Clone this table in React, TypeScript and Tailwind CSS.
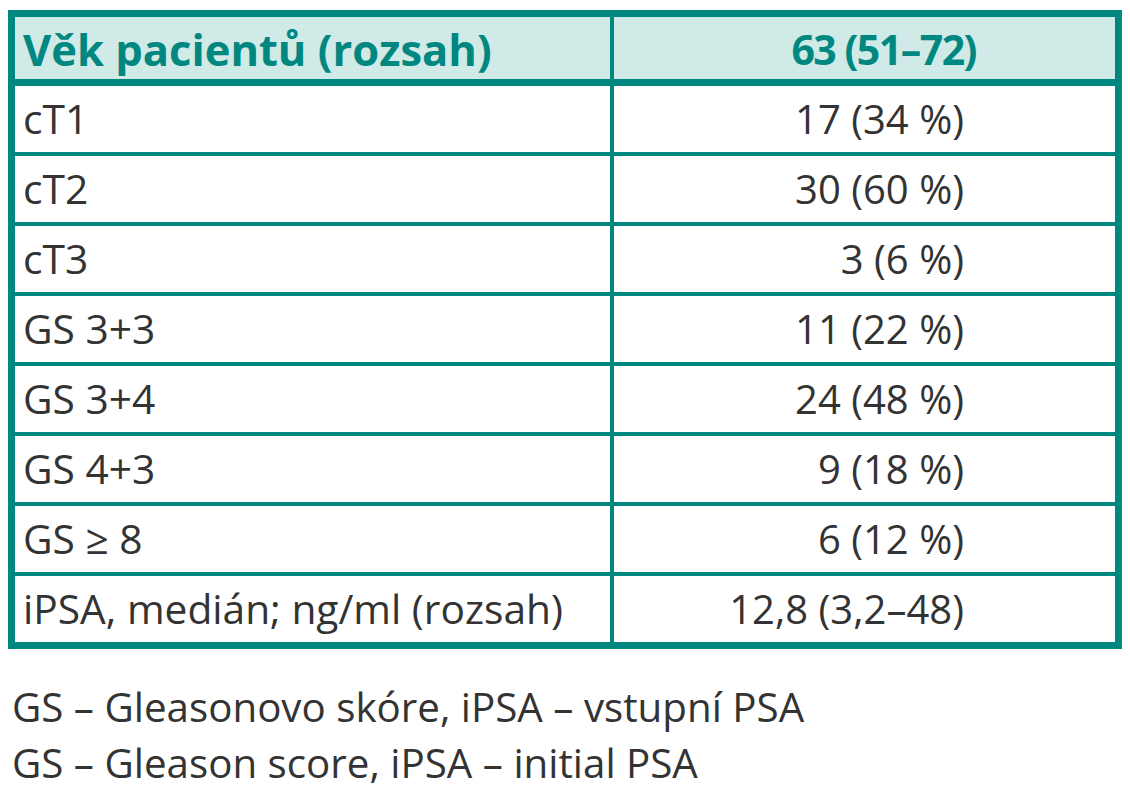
import React from "react";

const rows: [string, string][] = [
  ["cT1", "17 (34 %)"],
  ["cT2", "30 (60 %)"],
  ["cT3", "3 (6 %)"],
  ["GS 3+3", "11 (22 %)"],
  ["GS 3+4", "24 (48 %)"],
  ["GS 4+3", "9 (18 %)"],
  ["GS ≥ 8", "6 (12 %)"],
  ["iPSA, medián; ng/ml (rozsah)", "12,8 (3,2–48)"],
];

export default function App() {
  return (
    <div className="w-[1130px] h-[800px] bg-white pt-[10px] px-[8px] font-['Open_Sans',sans-serif] text-[#333]">
      {/* Table */}
      <div className="border-[7px] border-[#00877f]">
        <div className="grid grid-cols-[595px_1fr] h-[69px] bg-[#cfeae7] border-b-[7px] border-[#00877f] text-[#00877f] font-bold">
          <div className="flex items-center pl-[8px] text-[43.5px]">Věk pacientů (rozsah)</div>
          <div className="flex items-center justify-end pr-[139px] border-l-[4px] border-[#00877f] text-[41px] tracking-[-1.5px]">63 (51–72)</div>
        </div>
        {rows.map(([label, value], i) => (
          <div
            key={label}
            className={`grid grid-cols-[595px_1fr] text-[40px] ${
              i < rows.length - 1 ? "h-[70px] border-b-[4px] border-[#00877f]" : "h-[66px]"
            }`}
          >
            <div className="flex items-center pl-[8px] text-[40.7px]">{label}</div>
            <div className="flex items-center justify-end pr-[151px] border-l-[4px] border-[#00877f]">{value}</div>
          </div>
        ))}
      </div>

      {/* Footnotes */}
      <div className="mt-[30px] pl-[4px] text-[40.3px] leading-[56px]">
        <p>GS – Gleasonovo skóre, iPSA – vstupní PSA</p>
        <p>GS – Gleason score, iPSA – initial PSA</p>
      </div>
    </div>
  );
}
